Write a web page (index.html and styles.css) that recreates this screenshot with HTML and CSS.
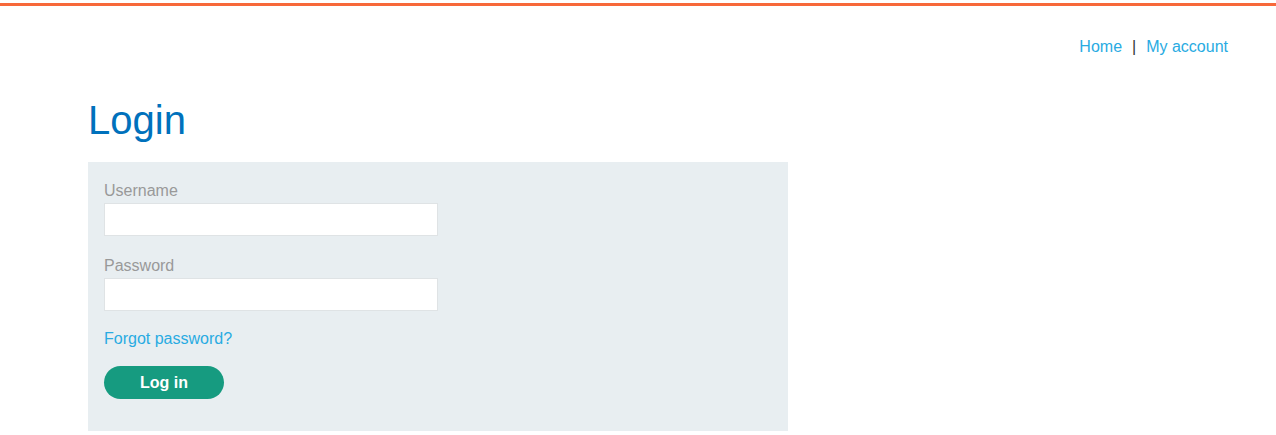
FILE: index.html
```html
<!DOCTYPE html>
<html lang="en">
<head>
<meta charset="utf-8">
<title>Login</title>
<link rel="stylesheet" href="styles.css">
</head>
<body>
<div class="topbar"></div>
<header class="nav">
  <a class="nav-link" href="#">Home</a>
  <span class="sep">|</span>
  <a class="nav-link" href="#">My account</a>
</header>
<main class="content">
  <h1 class="title">Login</h1>
  <section class="panel">
    <form class="login-form">
      <label class="label" for="username">Username</label>
      <input class="field" id="username" type="text">
      <label class="label label-second" for="password">Password</label>
      <input class="field" id="password" type="password">
      <a class="forgot" href="#">Forgot password?</a>
      <button class="btn" type="button">Log in</button>
    </form>
  </section>
</main>
</body>
</html>
```

FILE: styles.css
```css
* { box-sizing: border-box; }
html, body { margin: 0; padding: 0; background: #fff; }
body {
  font-family: "Liberation Sans", Arial, sans-serif;
  font-size: 16px;
  line-height: 18px;
  color: #333;
}
.topbar {
  margin-top: 3px;
  height: 3px;
  background: #f7683a;
}
.nav {
  display: flex;
  justify-content: flex-end;
  align-items: baseline;
  gap: 10px;
  padding: 32px 48px 0 0;
  height: 49px;
}
.nav-link { color: #29abe2; text-decoration: none; }
.sep { color: #333; }
.content { padding-left: 88px; }
.title {
  margin: 41px 0 18px;
  font-size: 40px;
  line-height: 48px;
  font-weight: normal;
  color: #0071bc;
}
.panel {
  width: 700px;
  background: #e8eef1;
  padding: 20px 16px 32px;
}
.login-form { display: flex; flex-direction: column; align-items: flex-start; }
.label { color: #999; display: block; }
.label-second { margin-top: 21px; }
.field {
  margin-top: 3px;
  width: 334px;
  height: 33px;
  border: 1px solid #dfe3e5;
  background: #fff;
  font: inherit;
  padding: 0 8px;
}
.forgot {
  margin-top: 19px;
  color: #29abe2;
  text-decoration: none;
}
.btn {
  margin-top: 18px;
  width: 120px;
  height: 33px;
  border: none;
  border-radius: 17px;
  background: #169b80;
  color: #fff;
  font: bold 16px/18px "Liberation Sans", Arial, sans-serif;
  padding: 0;
}
```
